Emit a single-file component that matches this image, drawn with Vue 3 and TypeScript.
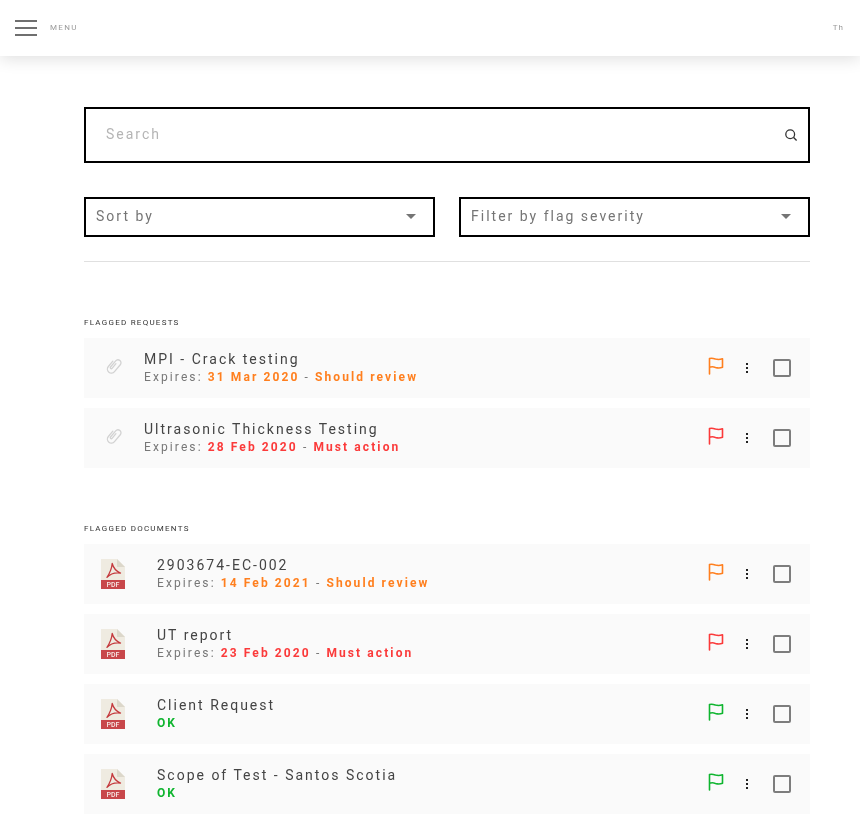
<script setup lang="ts">
interface Item {
  title: string;
  date?: string;
  status: string;
  level: "warn" | "danger" | "ok";
}

const requests: Item[] = [
  { title: "MPI - Crack testing", date: "31 Mar 2020", status: "Should review", level: "warn" },
  { title: "Ultrasonic Thickness Testing", date: "28 Feb 2020", status: "Must action", level: "danger" },
];

const documents: Item[] = [
  { title: "2903674-EC-002", date: "14 Feb 2021", status: "Should review", level: "warn" },
  { title: "UT report", date: "23 Feb 2020", status: "Must action", level: "danger" },
  { title: "Client Request", status: "OK", level: "ok" },
  { title: "Scope of Test - Santos Scotia", status: "OK", level: "ok" },
];

const sections = [
  { label: "Flagged requests", kind: "request", items: requests },
  { label: "Flagged documents", kind: "document", items: documents },
];
</script>

<template>
  <div class="page">
    <header class="topbar">
      <div class="menu">
        <span class="burger"><i></i><i></i><i></i></span>
        <span class="menu__label">MENU</span>
      </div>
      <span class="user">Th</span>
    </header>

    <main class="content">
      <div class="search">
        <span class="search__text">Search</span>
        <svg class="search__icon" width="14" height="14" viewBox="0 0 14 14" fill="none" stroke="#333">
          <circle cx="6.2" cy="6.2" r="4.4" stroke-width="1.3" />
          <path d="M9.6 9.6 L12.6 12.6" stroke-width="1.4" />
        </svg>
      </div>

      <div class="filters">
        <div class="select">
          <span class="select__text">Sort by</span>
          <span class="select__arrow"></span>
        </div>
        <div class="select">
          <span class="select__text">Filter by flag severity</span>
          <span class="select__arrow"></span>
        </div>
      </div>

      <section v-for="section in sections" :key="section.label" class="section">
        <h2 class="section__label">{{ section.label }}</h2>
        <div class="rows">
          <div v-for="item in section.items" :key="item.title" class="row">
            <svg v-if="section.kind === 'request'" class="clip" width="18" height="18" viewBox="-2 0 18 18" fill="none" stroke="#d2d2d2" stroke-width="1.3" stroke-linecap="round">
              <path transform="rotate(40 7 9)" d="M3 6 V13 a4 4 0 0 0 8 0 V4 a3 3 0 0 0 -6 0 V12 a1 1 0 0 0 2 0 V6" />
            </svg>
            <svg v-else class="pdf" width="24" height="30" viewBox="0 0 24 30">
              <path d="M0 0 H16 L24 8 V22 H0 Z" fill="#efebe1" />
              <path d="M16 0 L24 8 H16 Z" fill="#dcd7ca" />
              <rect x="0" y="21" width="24" height="9" fill="#c8474a" />
              <path d="M11.2 4.5 C12.4 9 14.5 12 19.5 14 C15 13.4 9.5 14.5 6 18.4 C8.5 14.5 10.8 9.5 11.2 4.5 Z" fill="none" stroke="#c4383c" stroke-width="1.3" stroke-linejoin="round" />
              <text x="12" y="28.4" class="pdf__text" text-anchor="middle">PDF</text>
            </svg>

            <div class="row__body">
              <div class="row__title">{{ item.title }}</div>
              <div class="row__meta">
                <template v-if="item.date">
                  Expires: <b :class="`tone--${item.level}`">{{ item.date }}</b> - <b :class="`tone--${item.level}`">{{ item.status }}</b>
                </template>
                <b v-else :class="`tone--${item.level}`">{{ item.status }}</b>
              </div>
            </div>

            <svg class="flag" :class="`tone--${item.level}`" width="16" height="18" viewBox="0 0 16 18" fill="none" stroke="currentColor" stroke-width="1.6" stroke-linejoin="round" stroke-linecap="round">
              <path d="M1.5 17 V1.6 C4 0.8 5.5 1.4 7.5 2.1 C10 2.9 12 2.7 14.5 1.8 V10.2 C12 11.2 10 11.2 7.5 10.4 C5.5 9.7 4 9.5 1.5 10.2" />
            </svg>
            <span class="dots"><i></i><i></i><i></i></span>
            <span class="check"></span>
          </div>
        </div>
      </section>
    </main>
  </div>
</template>

<style scoped>
.page {
  font-family: Roboto, "Liberation Sans", sans-serif;
  color: #333;
  height: 816px;
  overflow: hidden;
  will-change: transform;
}

.topbar {
  height: 56px;
  display: flex;
  align-items: center;
  justify-content: space-between;
  padding: 0 16px 0 15px;
  background: #fff;
  box-shadow: 0 2px 16px rgba(0, 0, 0, 0.14);
}

.menu {
  display: flex;
  align-items: center;
  gap: 13px;
}

.burger {
  display: flex;
  flex-direction: column;
  gap: 5px;
  width: 22px;
}

.burger i {
  display: block;
  height: 2px;
  background: #6f6f6f;
}

.menu__label,
.user {
  font-size: 8px;
  letter-spacing: 1.3px;
  color: #9a9a9a;
  line-height: 10px;
}

.user {
  letter-spacing: 1px;
}

.content {
  padding: 51px 50px 0 84px;
}

.search {
  height: 56px;
  box-sizing: border-box;
  border: 2px solid #000;
  display: flex;
  align-items: center;
  justify-content: space-between;
  padding: 0 10px 0 20px;
}

.search__text {
  font-size: 14px;
  line-height: 18px;
  margin-top: -2px;
  letter-spacing: 2px;
  color: #b5b5b5;
}

.filters {
  display: flex;
  gap: 24px;
  margin-top: 34px;
  padding-bottom: 24px;
  border-bottom: 1px solid #e0e0e0;
}

.select {
  flex: 1;
  height: 40px;
  box-sizing: border-box;
  border: 2px solid #000;
  display: flex;
  align-items: center;
  justify-content: space-between;
  padding: 0 17px 0 10px;
  font-size: 14px;
  letter-spacing: 2px;
  color: #757575;
}

.select__text {
  line-height: 18px;
  margin-top: -2px;
}

.select__arrow {
  width: 0;
  height: 0;
  border-left: 5px solid transparent;
  border-right: 5px solid transparent;
  border-top: 5px solid #757575;
  margin-top: -1px;
}

.section {
  margin-top: 56px;
}

.section__label {
  margin: 0 0 10px;
  font-size: 8px;
  font-weight: 400;
  line-height: 10px;
  letter-spacing: 1.25px;
  text-transform: uppercase;
  color: #333;
}

.rows {
  display: flex;
  flex-direction: column;
  gap: 10px;
}

.row {
  height: 60px;
  display: flex;
  align-items: center;
  background: #fafafa;
  padding-right: 19px;
}

.clip {
  margin: -4px 21px 0 21px;
}

.pdf {
  margin-left: 17px;
  margin-right: 32px;
}

.pdf__text {
  font-family: Roboto, "Liberation Sans", sans-serif;
  font-size: 7px;
  font-weight: 500;
  fill: #f7e9e6;
}

.row__body {
  flex: 1;
  min-width: 0;
}

.row__title {
  font-size: 14px;
  line-height: 18px;
  letter-spacing: 2px;
  color: #444;
  margin-top: -2px;
}

.row__meta {
  font-size: 12px;
  line-height: 16px;
  letter-spacing: 2.1px;
  color: #777;
  margin-top: 1px;
}

.row__meta b {
  font-weight: 700;
}

.tone--warn {
  color: #ff7f1e;
}

.tone--danger {
  color: #fb3a3a;
}

.tone--ok {
  color: #0fb52f;
}

.flag {
  margin-top: -5px;
}

.dots {
  display: flex;
  flex-direction: column;
  gap: 2px;
  margin-left: 22px;
  margin-right: 25px;
}

.dots i {
  display: block;
  width: 2px;
  height: 2px;
  background: #222;
}

.check {
  width: 18px;
  height: 18px;
  box-sizing: border-box;
  border: 2px solid #7d7d7d;
  border-radius: 2px;
}
</style>

<style>
html,
body {
  overflow: hidden;
  background: #fff;
}
</style>
